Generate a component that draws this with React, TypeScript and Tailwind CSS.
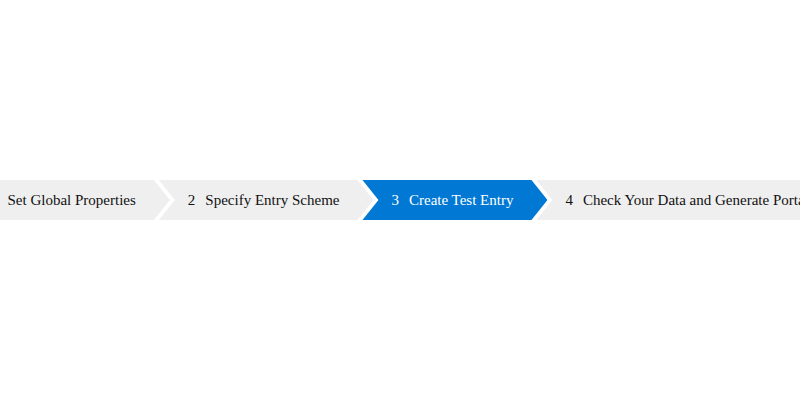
const steps = [
  { n: 1, label: "Set Global Properties" },
  { n: 2, label: "Specify Entry Scheme" },
  { n: 3, label: "Create Test Entry", active: true },
  { n: 4, label: "Check Your Data and Generate Portal" },
];

export default function App() {
  return (
    <div className="h-[400px] w-[800px] overflow-hidden bg-white flex items-center font-['Liberation_Serif',serif]">
      <div className="flex -ml-[39px]">
        {steps.map((s, i) => (
          <div
            key={s.n}
            className={`flex items-center h-10 pl-[29px] pr-[34px] whitespace-nowrap text-[15px] [clip-path:polygon(0_0,calc(100%-16px)_0,100%_50%,calc(100%-16px)_100%,0_100%,16px_50%)] ${
              i > 0 ? "-ml-[11px]" : ""
            } ${s.active ? "bg-[#0078d4] text-white" : "bg-[#efefef] text-[#111]"}`}
          >
            <span className="mr-[10px]">{s.n}</span>
            <span>{s.label}</span>
          </div>
        ))}
      </div>
    </div>
  );
}
